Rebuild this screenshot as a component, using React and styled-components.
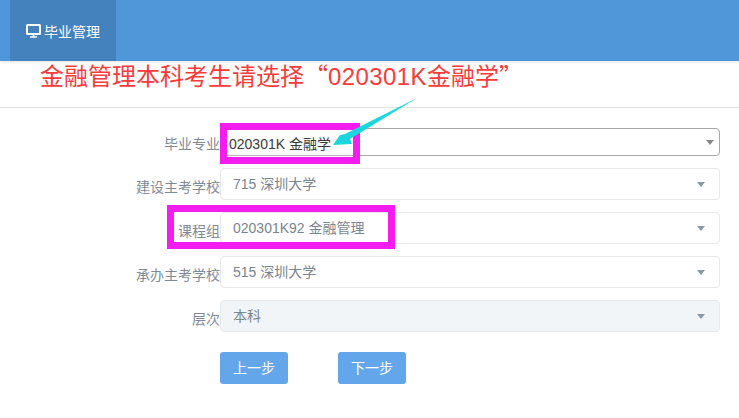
import React from "react";
import styled, { createGlobalStyle } from "styled-components";

const Global = createGlobalStyle`
  html, body { margin: 0; padding: 0; background: #fff; }
  body { font-family: "Liberation Sans", "Noto Sans CJK SC", sans-serif; }
`;
const Page = styled.div`
  position: relative;
  width: 739px;
  height: 418px;
  overflow: hidden;
  background: #fff;
`;
const Header = styled.header`
  height: 61px;
  padding-left: 10px;
  background: #4f97d9;
  box-shadow: 0 1px 3px rgba(0,0,0,.12);
  display: flex;
`;
const Tab = styled.div`
  width: 106px;
  background: #4482bd;
  color: #fff;
  font-size: 14px;
  display: flex;
  align-items: center;
  justify-content: center;
  gap: 3px;
`;
const Banner = styled.h1`
  margin: 0;
  height: 46px;
  padding: 0 0 0 40px;
  color: #fb3a3a;
  font-size: 24px;
  line-height: 27px;
  font-weight: 400;
  white-space: nowrap;
  border-bottom: 1px solid #e2e2e2;
`;
const Quote = styled.span`
  font-family: "Noto Sans CJK SC", sans-serif;
`;
const Code = styled.span`
  letter-spacing: 0.4px;
`;
const Form = styled.div`
  display: flex;
  flex-direction: column;
  gap: 12px;
  padding: 20px 19px 0 0;
`;
const Row = styled.div`
  display: flex;
  height: ${p => p.$h || 32}px;
`;
const Label = styled.label`
  width: 220px;
  box-sizing: border-box;
  text-align: right;
  color: #7f8a96;
  font-size: 14px;
  line-height: ${p => p.$lh || 38}px;
`;
const Select = styled.div`
  flex: 1;
  box-sizing: border-box;
  display: flex;
  align-items: center;
  justify-content: space-between;
  padding: 0 ${p => p.$focus ? 5 : 14}px 2px 12px;
  border: 1px solid ${p => p.$focus ? "#a8a8a8" : "#e6e9ec"};
  border-radius: 4px;
  background: ${p => p.$disabled ? "#f2f5f8" : "#fff"};
  color: #7b8590;
  font-size: 14px;
`;
const Caret = styled.span`
  width: 0;
  height: 0;
  margin-top: 3px;
  border-left: 4px solid transparent;
  border-right: 4px solid transparent;
  border-top: 5px solid ${p => p.$dark ? "#888" : "#8a98a5"};
`;
const Buttons = styled.div`
  display: flex;
  gap: 50px;
  padding: 8px 0 0 220px;
`;
const Button = styled.button`
  width: 68px;
  height: 32px;
  padding: 0 0 3px;
  border: 0;
  border-radius: 3px;
  background: #63a7ea;
  color: #fff;
  font: 14px "Liberation Sans", "Noto Sans CJK SC", sans-serif;
`;
const Mark = styled.div`
  position: absolute;
  box-sizing: border-box;
  border: 7px solid #f41df0;
  left: ${p => p.$x}px;
  top: ${p => p.$y}px;
  width: ${p => p.$w}px;
  height: ${p => p.$h}px;
  background: ${p => p.$fill ? "#fff" : "transparent"};
`;
const MarkText = styled.span`
  position: absolute;
  left: 2px;
  top: 3px;
  font-size: 14px;
  color: #3a3a3a;
  white-space: nowrap;
`;
const MarkLine = styled.span`
  position: absolute;
  left: 0;
  right: 0;
  bottom: 1px;
  height: 1px;
  background: #b4b4b4;
`;
const Arrow = styled.svg`
  position: absolute;
  left: 320px;
  top: 90px;
`;

const App = () => (
  <Page>
    <Global />
    <Header>
      <Tab>
        <svg width="15" height="14" viewBox="0 0 15 14" fill="none" stroke="#fff">
          <rect x="1" y="1" width="13" height="9" strokeWidth="2" rx="0.5" />
          <path d="M7.5 10v3M4 13h7" strokeWidth="1.6" />
        </svg>
        毕业管理
      </Tab>
    </Header>
    <Banner>金融管理本科考生请选择<Quote>“</Quote><Code>020301K</Code>金融学<Quote>”</Quote></Banner>
    <Form>
      <Row $h={28}>
        <Label $lh={32}>毕业专业</Label>
        <Select $focus>
          <span />
          <Caret $dark />
        </Select>
      </Row>
      <Row>
        <Label>建设主考学校</Label>
        <Select>715 深圳大学<Caret /></Select>
      </Row>
      <Row>
        <Label>课程组</Label>
        <Select>020301K92 金融管理<Caret /></Select>
      </Row>
      <Row>
        <Label>承办主考学校</Label>
        <Select>515 深圳大学<Caret /></Select>
      </Row>
      <Row>
        <Label>层次</Label>
        <Select $disabled>本科<Caret /></Select>
      </Row>
      <Buttons>
        <Button>上一步</Button>
        <Button>下一步</Button>
      </Buttons>
    </Form>
    <Mark $x={220} $y={123} $w={140} $h={41} $fill>
      <MarkText>020301K 金融学</MarkText>
      <MarkLine />
    </Mark>
    <Mark $x={167} $y={205} $w={228} $h={44} />
    <Arrow width="100" height="60" viewBox="0 0 100 60">
      <path d="M97 8 L25 44 L20 45 L13 55 L32 54 L30 49 Z" fill="#1bd6dc" />
    </Arrow>
  </Page>
);
export default App;
